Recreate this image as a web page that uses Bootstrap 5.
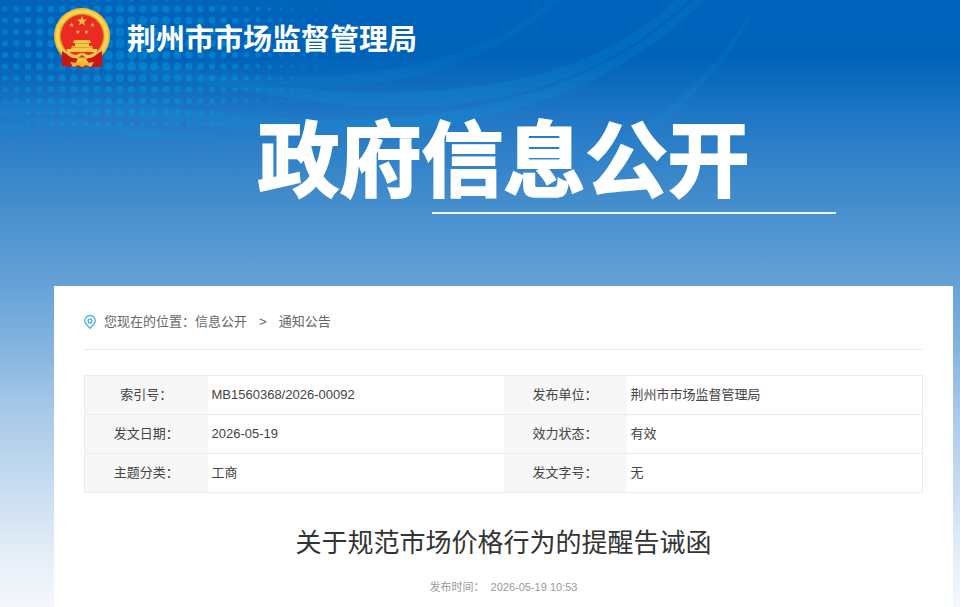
<!DOCTYPE html>
<html lang="zh-CN">
<head>
<meta charset="utf-8">
<meta name="viewport" content="width=device-width, initial-scale=1">
<title>关于规范市场价格行为的提醒告诫函</title>
<link href="https://cdn.jsdelivr.net/npm/bootstrap@5.3.0/dist/css/bootstrap.min.css" rel="stylesheet">
<style>
body{font-family:"Liberation Sans","Noto Sans CJK SC",sans-serif;font-size:13px;line-height:20px;color:#444;overflow-x:hidden;
background:linear-gradient(#0063bc 0,#0063ba 58px,#2077c5 116px,#3f8acb 190px,#66a2d7 286px,#85b4de 350px,#a2c5e8 400px,#b8d4ec 450px,#cddff3 500px,#e2edf7 550px,#f5f8fd 607px) no-repeat #f5f8fd}
.page{padding:0 7px 0 54px}
.backdrop{position:absolute;left:0;top:0;z-index:-1}
.brand{gap:17px;padding-top:8px}
.brand-name{font-size:29px;line-height:56px;padding-top:4px;font-weight:700;color:#fff}
.banner{padding-top:34px;height:218px}
.banner h1{font-size:82px;line-height:120px;font-weight:700;color:#fff;white-space:nowrap;-webkit-text-stroke:2px #fff}
.banner-rule{width:45%;margin-left:42%;height:2px;margin-top:-10px;background:#fff;opacity:.9}
.sheet{padding:26px 30px 12px;min-height:calc(100vh - 286px)}
.trail{gap:8px;color:#666;padding-bottom:17px;border-bottom:1px solid #ececec}
.trail a{color:#666}
.facts{margin:25px 0 32px;table-layout:fixed;width:100%;border:1px solid #ebebeb}
.facts tr+tr{border-top:1px solid #ebebeb}
.facts th,.facts td{height:39px;padding:0 4px}
.facts th{width:123px;background:#f7f7f7;font-weight:400;text-align:center}
.sheet h2{font-size:26px;line-height:36px;color:#333;font-weight:400}
.stamp{font-size:11px;line-height:16px;color:#999;gap:6px;margin-top:18px}
</style>
<script src="https://cdn.jsdelivr.net/npm/bootstrap@5.3.0/dist/js/bootstrap.bundle.min.js"></script>
</head>
<body>
<svg class="backdrop" width="760" height="220" viewBox="0 0 760 220" aria-hidden="true">
<defs>
<linearGradient id="fade"><stop offset="0" stop-color="#08a0de" stop-opacity=".1"/><stop offset=".55" stop-color="#08a0de" stop-opacity=".2"/><stop offset="1" stop-color="#08a0de" stop-opacity=".13"/></linearGradient>
</defs>
<g fill="url(#fade)">
<path d="M0 102C110 90 220 123 350 119C500 116 610 79 694 0H704C619 86 505 127 360 132C220 137 120 104 0 117Z"/>
<path d="M100 55C210 75 310 99 430 91C550 83 622 50 676 0H688C619 65 545 96 440 105C320 114 210 80 100 68Z"/>
<path d="M150 62C260 78 340 82 420 63C480 48 520 29 550 0H563C520 34 480 59 425 74C340 93 250 90 150 62Z" opacity=".6"/>
<path d="M0 120C100 110 170 140 280 142C180 151 80 118 0 134Z" opacity=".7"/>
<path d="M580 158C657 126 710 80 747 16L751 18C713 86 657 136 580 168Z" opacity=".7"/>
</g>
<g id="dots" fill="#049edc"></g>
</svg>
<div class="page">
<header class="brand d-flex align-items-center">
<svg width="56" height="60" viewBox="0 0 56 60" role="img" aria-label="国徽">
<path d="M7 42L8 58H20L28 60L37 58H48L49 42Z" fill="#d91e18"/>
<circle cx="28" cy="28" r="28" fill="#f2ba35"/>
<circle cx="28" cy="28" r="24.500" fill="none" stroke="#ffd653" stroke-width="3"/>
<circle cx="28" cy="28" r="21.500" fill="#eb2b23" stroke="#c98518"/>
<g fill="#f6c744"><path id="star" d="M28 8L29.300 11.600H33L30 13.900L31.200 17.500L28 15.300L24.800 17.500L26 13.900L23 11.600H26.700Z"/>
<use href="#star" transform="translate(5 11) scale(.45)"/><use href="#star" transform="translate(25.800 11) scale(.45)"/><use href="#star" transform="translate(11.200 18) scale(.45)"/><use href="#star" transform="translate(19.800 18) scale(.45)"/>
<path d="M20 32H36L37 35H35V38H38L39 41H43V44H13V41H17L18 38H21V35H19Z"/></g>
<path d="M21 35.500H35M18 39.500H38" stroke="#d99726" stroke-width=".8"/>
<path d="M8 43L18 49L24 51L19 59L8 58ZM48 43L38 49L32 51L37 59H48Z" fill="#c91813"/>
<path d="M14 42Q20 50 26 45H30Q36 50 42 42L43 46Q37 52 31 49L28 47L25 49Q18 52 13 46Z" fill="#f6c744"/>
<path d="M16 54L23 55L28 51L33 55L40 54L37 59L32 57L28 59L24 57L19 59Z" fill="#f4b931"/>
</svg>
<div class="brand-name">荆州市市场监督管理局</div>
</header>
<section class="banner text-center">
<h1 class="m-0">政府信息公开</h1>
<div class="banner-rule"></div>
</section>
<main class="sheet bg-white">
<nav class="trail d-flex align-items-center" aria-label="当前位置">
<svg width="12" height="14" viewBox="0 0 12 14" fill="none" stroke="#42aee5" stroke-width="1.300" aria-hidden="true"><path d="M6 13.200C4 11 .7 8.600 .7 5.800A5.300 5.200 0 0 1 11.300 5.800C11.300 8.600 8 11 6 13.200Z"/><circle cx="6" cy="6" r="1.900"/></svg>
<div>您现在的位置：<a class="text-decoration-none" href="#">信息公开</a><span class="mx-2 px-1">&gt;</span><a class="text-decoration-none" href="#">通知公告</a></div>
</nav>
<table class="facts">
<tbody>
<tr><th scope="row">索引号：</th><td>MB1560368/2026-00092</td><th scope="row">发布单位：</th><td>荆州市市场监督管理局</td></tr>
<tr><th scope="row">发文日期：</th><td>2026-05-19</td><th scope="row">效力状态：</th><td>有效</td></tr>
<tr><th scope="row">主题分类：</th><td>工商</td><th scope="row">发文字号：</th><td>无</td></tr>
</tbody>
</table>
<h2 class="m-0 text-center">关于规范市场价格行为的提醒告诫函</h2>
<div class="stamp d-flex justify-content-center"><span>发布时间：</span><time datetime="2026-05-19T10:53">2026-05-19 10:53</time></div>
</main>
</div>
<script>
// Halftone dots: largest around (130, 45), shrinking outwards
var dots = document.getElementById('dots');
for (var r = 0; r < 18; r++) {
  for (var c = 0; c < 34; c++) {
    var x = 5 + c * 11.5, y = -2.5 + r * 11.5;
    var d = Math.hypot((x - 130) / (x > 130 ? 270 : 320), (y - 45) / 170);
    var size = 4.9 * (1 - d);
    if (size < 0.4) continue;
    var dot = document.createElementNS('http://www.w3.org/2000/svg', 'circle');
    dot.setAttribute('cx', x);
    dot.setAttribute('cy', y);
    dot.setAttribute('r', size);
    dot.setAttribute('opacity', Math.min(0.45, 0.75 * (1 - d)));
    dots.appendChild(dot);
  }
}
</script>
</body>
</html>
